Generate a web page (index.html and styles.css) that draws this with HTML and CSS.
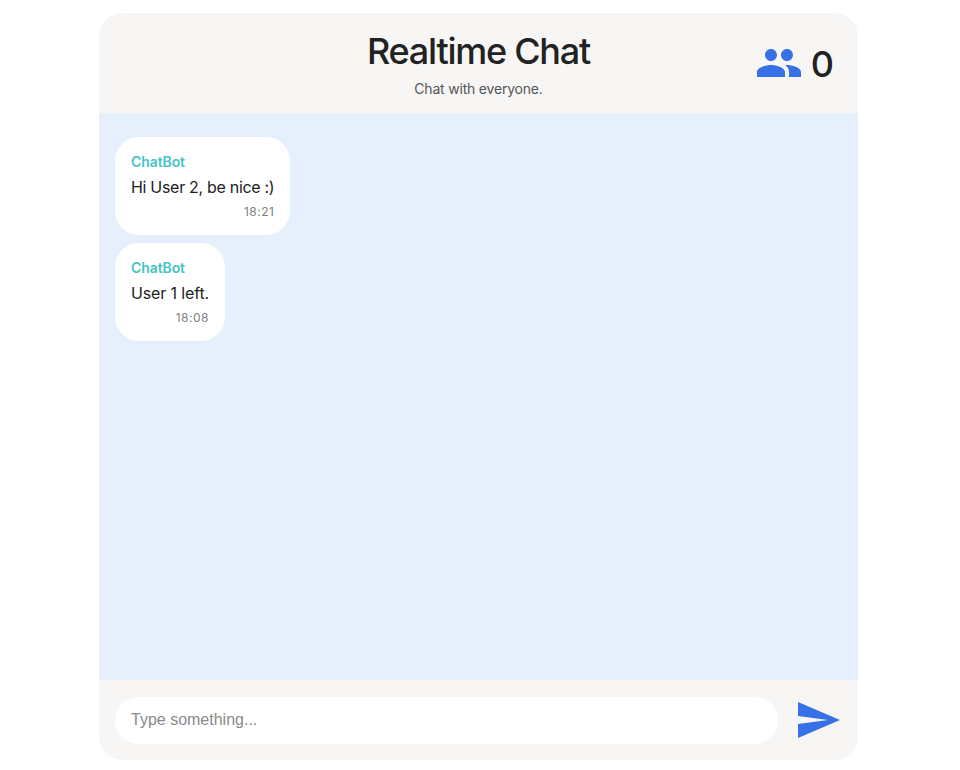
FILE: index.html
```html
<!DOCTYPE html>
<html lang="en">
<head>
<meta charset="utf-8">
<title>Realtime Chat</title>
<link rel="stylesheet" href="styles.css">
</head>
<body>
<main class="chat">
  <header class="chat-header">
    <div></div>
    <div class="heading">
      <h1>Realtime Chat</h1>
      <p>Chat with everyone.</p>
    </div>
    <div class="users">
      <svg class="users-icon" viewBox="0 0 24 24" aria-hidden="true"><path d="M16 11c1.66 0 2.99-1.34 2.99-3S17.66 5 16 5c-1.66 0-3 1.34-3 3s1.34 3 3 3zm-8 0c1.66 0 2.99-1.34 2.99-3S9.66 5 8 5C6.34 5 5 6.34 5 8s1.34 3 3 3zm0 2c-2.33 0-7 1.17-7 3.5V19h14v-2.5c0-2.33-4.67-3.5-7-3.5zm8 0c-.29 0-.62.02-.97.05 1.16.84 1.97 1.97 1.97 3.45V19h6v-2.5c0-2.33-4.67-3.5-7-3.5z"/></svg>
      <span class="users-count">0</span>
    </div>
  </header>
  <section class="messages">
    <article class="message">
      <span class="author">ChatBot</span>
      <p class="text">Hi User 2, be nice :)</p>
      <time>18:21</time>
    </article>
    <article class="message">
      <span class="author">ChatBot</span>
      <p class="text text-short">User 1 left.</p>
      <time>18:08</time>
    </article>
  </section>
  <form class="composer">
    <input type="text" placeholder="Type something...">
    <button type="button" aria-label="Send">
      <svg viewBox="0 0 24 24" aria-hidden="true"><path d="M2.01 21L23 12 2.01 3 2 10l15 2-15 2z"/></svg>
    </button>
  </form>
</main>
</body>
</html>
```
FILE: styles.css
```css
* {
  box-sizing: border-box;
}

body {
  margin: 0;
  font-family: Inter, "Liberation Sans", sans-serif;
  color: #222;
  background: #fff;
}

.chat {
  display: flex;
  flex-direction: column;
  width: 759px;
  height: 747px;
  margin: 13px 0 0 99px;
  border-radius: 24px;
  overflow: hidden;
  background: #f7f6f5;
}

.chat-header {
  display: grid;
  grid-template-columns: 1fr auto 1fr;
  align-items: center;
  height: 100px;
  padding: 0 24px;
}

.heading {
  text-align: center;
}

.heading h1 {
  margin: 2px 0 0;
  font-size: 36px;
  line-height: 44px;
  font-weight: 550;
  letter-spacing: -1.25px;
}

.heading p {
  margin: 6px 0 0;
  font-size: 14px;
  line-height: 20px;
  letter-spacing: -0.2px;
  color: #555;
}

.users {
  display: flex;
  justify-content: flex-end;
  align-items: center;
  gap: 8px;
}

.users-icon {
  width: 48px;
  height: 48px;
  fill: #3771e8;
}

.users-count {
  padding-top: 2px;
  font-size: 36px;
  line-height: 44px;
  font-weight: 550;
}

.messages {
  flex: 1;
  display: flex;
  flex-direction: column;
  align-items: flex-start;
  gap: 8px;
  padding: 24px 16px;
  background: #e6f0fd;
}

.message {
  display: flex;
  flex-direction: column;
  height: 98px;
  padding: 16px;
  border-radius: 24px;
  background: #fff;
}

.author {
  font-size: 14px;
  line-height: 18px;
  font-weight: 600;
  letter-spacing: -0.1px;
  color: #45c4c6;
}

.text {
  margin: 5px 0 6px;
  font-size: 16px;
  line-height: 22px;
  letter-spacing: -0.3px;
}

.text-short {
  letter-spacing: -0.14px;
}

.message time {
  align-self: flex-end;
  font-size: 12px;
  line-height: 16px;
  letter-spacing: 0.5px;
  color: #808080;
}

.composer {
  display: flex;
  align-items: center;
  height: 80px;
  padding: 0 16px;
}

.composer input {
  flex: 1;
  height: 47px;
  padding: 0 16px 1px;
  border: 0;
  border-radius: 24px;
  font: 16px "Liberation Sans", Arial, sans-serif;
  background: #fff;
}

.composer input::placeholder {
  color: #8a8a8a;
}

.composer button {
  display: flex;
  margin-left: 16px;
  padding: 0;
  border: 0;
  background: none;
}

.composer svg {
  width: 48px;
  height: 48px;
  fill: #3771e8;
}
```
